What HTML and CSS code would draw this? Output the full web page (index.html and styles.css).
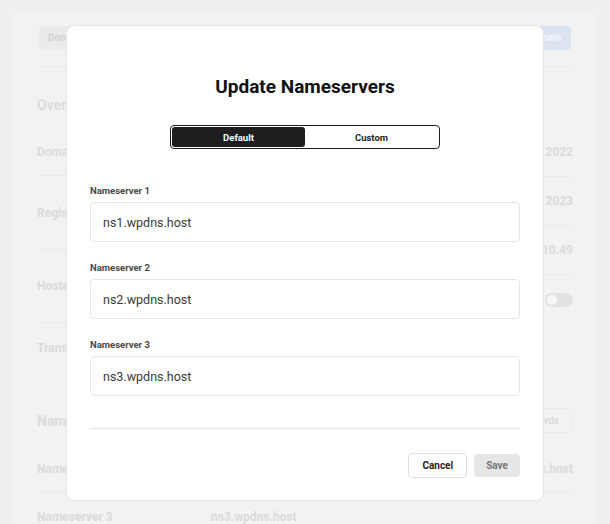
FILE: index.html
```html
<!DOCTYPE html>
<html>
<head>
<meta charset="utf-8">
<link rel="stylesheet" href="styles.css">
</head>
<body>
<div class="page">
  <div class="topbar">
    <span class="btn-ghost">Domains</span>
    <span class="btn-blue">Add Domain</span>
  </div>
  <h2 class="sec-title">Overview</h2>
  <div class="cols">
    <div class="col-left">
      <div class="lrow r1">Domain name</div>
      <div class="lrow r2">Registered on</div>
      <div class="lrow r3">Hosted on</div>
      <div class="lrow r4 last">Transfer lock</div>
    </div>
    <div class="col-right">
      <div class="rrow">Jan 12, 2022</div>
      <div class="rrow">Jan 12, 2023</div>
      <div class="rrow">$10.49</div>
      <div class="rrow last"><span class="switch"><span class="knob"></span></span></div>
    </div>
  </div>
  <div class="ns-head">
    <h2 class="sec-title ns-title">Nameservers</h2>
    <span class="btn-outline">DNS Records</span>
  </div>
  <div class="nsrow">
    <span>Nameserver 1</span>
    <span>ns1.wpdns.host</span>
  </div>
  <div class="nsrow2">
    <span class="nslabel">Nameserver 3</span>
    <span>ns3.wpdns.host</span>
  </div>
</div>

<div class="modal">
  <h1 class="modal-title">Update Nameservers</h1>
  <div class="seg">
    <span class="seg-item active">Default</span>
    <span class="seg-item">Custom</span>
  </div>
  <div class="field first">
    <label class="flabel">Nameserver 1</label>
    <div class="finput">ns1.wpdns.host</div>
  </div>
  <div class="field">
    <label class="flabel">Nameserver 2</label>
    <div class="finput">ns2.wpdns.host</div>
  </div>
  <div class="field">
    <label class="flabel">Nameserver 3</label>
    <div class="finput">ns3.wpdns.host</div>
  </div>
  <div class="divider"></div>
  <div class="actions">
    <span class="btn-cancel">Cancel</span>
    <span class="btn-save">Save</span>
  </div>
</div>
</body>
</html>
```
FILE: styles.css
```css
* { box-sizing: border-box; }
html, body { margin: 0; padding: 0; }
body {
  background: #efefef;
  font-family: Roboto, "Liberation Sans", sans-serif;
  width: 610px;
  height: 524px;
  overflow: hidden;
  position: relative;
}
.page {
  margin: 13px 13px 0;
  height: 511px;
  background: #f2f2f2;
  padding: 0 24px;
  overflow: hidden;
}
.topbar {
  height: 54px;
  display: flex;
  justify-content: space-between;
  align-items: flex-start;
  padding-top: 13px;
  border-bottom: 1px solid #ebebeb;
}
.btn-ghost {
  margin-left: 2px;
  height: 24px;
  line-height: 24px;
  padding: 0 9px;
  background: #ebebeb;
  color: #d4d4d4;
  font-size: 10px;
  font-weight: 700;
  border-radius: 4px;
}
.btn-blue {
  margin-right: 2px;
  height: 24px;
  line-height: 24px;
  padding: 0 10px;
  background: #dce4f1;
  color: #f3f6fb;
  font-size: 10px;
  font-weight: 700;
  border-radius: 4px;
}
.sec-title {
  margin: 0;
  font-size: 14px;
  line-height: 18px;
  font-weight: 700;
  color: #dcdcdc;
  padding-top: 29px;
}
.cols {
  display: flex;
  justify-content: space-between;
  margin-top: 14px;
}
.col-left, .col-right { width: 250px; }
.lrow, .rrow {
  display: flex;
  align-items: center;
  font-size: 12px;
  font-weight: 700;
  color: #dbdbdb;
  border-bottom: 1px solid #ebebeb;
}
.lrow.last, .rrow.last { border-bottom: none; }
.r1 { height: 48px; }
.r2 { height: 74px; }
.r3 { height: 73px; }
.r4 { height: 49px; }
.rrow { height: 49px; justify-content: flex-end; }
.switch {
  width: 28px;
  height: 14px;
  border-radius: 7px;
  background: #e2e2e2;
  position: relative;
}
.knob {
  position: absolute;
  left: 2px; top: 2px;
  width: 10px; height: 10px;
  border-radius: 50%;
  background: #f7f7f7;
}
.ns-head {
  display: flex;
  justify-content: space-between;
  align-items: center;
  margin-top: 36px;
}
.ns-title { padding-top: 0; }
.btn-outline {
  height: 25px;
  line-height: 23px;
  padding: 0 12px;
  border: 1px solid #ebebeb;
  border-radius: 4px;
  color: #dbdbdb;
  font-size: 10px;
  font-weight: 700;
  margin-right: 1px;
}
.nsrow {
  margin-top: 12px;
  height: 48px;
  display: flex;
  justify-content: space-between;
  align-items: center;
  border-bottom: 1px solid #ebebeb;
  font-size: 12px;
  font-weight: 700;
  color: #dbdbdb;
}
.nsrow2 {
  height: 48px;
  display: flex;
  align-items: center;
  font-size: 12px;
  font-weight: 700;
  color: #dbdbdb;
}
.nslabel { width: 174px; }

/* modal */
.modal {
  position: absolute;
  left: 66px;
  top: 25px;
  width: 478px;
  height: 476px;
  background: #fff;
  border: 1px solid #e4e4e4;
  border-radius: 8px;
  padding: 50px 23px 0;
}
.modal-title {
  margin: 0;
  text-align: center;
  font-size: 19px;
  line-height: 22px;
  font-weight: 700;
  color: #111;
}
.seg {
  margin: 27px auto 0;
  width: 270px;
  height: 24px;
  border: 1.5px solid #1e1e1e;
  border-radius: 4px;
  display: flex;
  padding: 1px;
}
.seg-item {
  flex: 1;
  display: flex;
  align-items: center;
  justify-content: center;
  font-size: 9.5px;
  font-weight: 700;
  color: #1e1e1e;
  border-radius: 3px;
}
.seg-item.active {
  background: #1e1e1e;
  color: #fff;
}
.field { margin-top: 20px; }
.field.first { margin-top: 36px; }
.flabel {
  display: block;
  font-size: 9.5px;
  line-height: 12px;
  font-weight: 700;
  color: #4a4a4a;
}
.finput {
  margin-top: 5px;
  height: 40px;
  border: 1px solid #e6e6e6;
  border-radius: 4px;
  padding: 0 12px;
  display: flex;
  align-items: center;
  font-size: 12.5px;
  color: #3a3a3a;
}
.divider {
  margin-top: 32px;
  height: 1px;
  background: #e2e2e2;
}
.actions {
  margin-top: 24px;
  display: flex;
  justify-content: flex-end;
  align-items: center;
  gap: 7px;
}
.btn-cancel {
  height: 25px;
  padding: 0 13px;
  display: flex;
  align-items: center;
  border: 1px solid #dedede;
  border-radius: 4px;
  font-size: 10px;
  font-weight: 700;
  color: #1e1e1e;
  background: #fff;
}
.btn-save {
  height: 23px;
  padding: 0 12px;
  display: flex;
  align-items: center;
  border-radius: 4px;
  font-size: 10px;
  font-weight: 700;
  color: #777;
  background: #e6e6e6;
}
```
